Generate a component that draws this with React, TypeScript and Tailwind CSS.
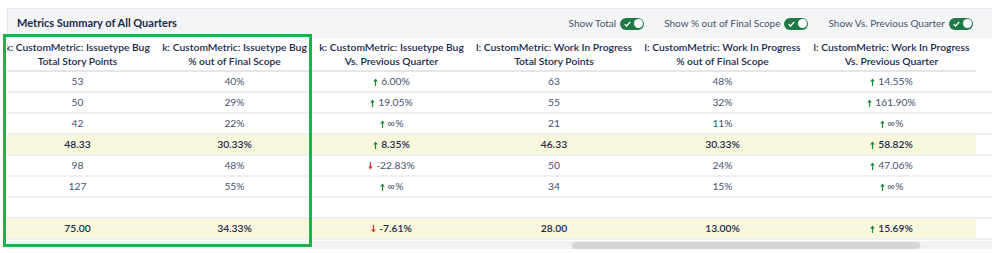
import React from "react";

type Cell = { v: string; dir?: "up" | "down" };

const headers = [
  ["k: CustomMetric: Issuetype Bug", "Total Story Points"],
  ["k: CustomMetric: Issuetype Bug", "% out of Final Scope"],
  ["k: CustomMetric: Issuetype Bug", "Vs. Previous Quarter"],
  ["l: CustomMetric: Work In Progress", "Total Story Points"],
  ["l: CustomMetric: Work In Progress", "% out of Final Scope"],
  ["l: CustomMetric: Work In Progress", "Vs. Previous Quarter"],
];

const up = (v: string): Cell => ({ v, dir: "up" });
const down = (v: string): Cell => ({ v, dir: "down" });
const c = (v: string): Cell => ({ v });

const rows: { total?: boolean; cells: Cell[] }[] = [
  { cells: [c("53"), c("40%"), up("6.00%"), c("63"), c("48%"), up("14.55%")] },
  { cells: [c("50"), c("29%"), up("19.05%"), c("55"), c("32%"), up("161.90%")] },
  { cells: [c("42"), c("22%"), up("∞%"), c("21"), c("11%"), up("∞%")] },
  { total: true, cells: [c("48.33"), c("30.33%"), up("8.35%"), c("46.33"), c("30.33%"), up("58.82%")] },
  { cells: [c("98"), c("48%"), down("-22.83%"), c("50"), c("24%"), up("47.06%")] },
  { cells: [c("127"), c("55%"), up("∞%"), c("34"), c("15%"), up("∞%")] },
  { cells: [c(""), c(""), c(""), c(""), c(""), c("")] },
  { total: true, cells: [c("75.00"), c("34.33%"), down("-7.61%"), c("28.00"), c("13.00%"), up("15.69%")] },
];

const cols = "grid grid-cols-[157px_157px_157px_168px_169px_169px_16px]";

function Arrow({ dir }: { dir: "up" | "down" }) {
  const color = dir === "up" ? "#1d8a36" : "#e0332b";
  return (
    <svg width="5" height="8" viewBox="0 0 5 8" className="mr-[3px]">
      {dir === "up" ? (
        <>
          <path d="M2.5 1.5V8" stroke={color} strokeWidth="1.2" />
          <path d="M0.2 3.6L2.5 0.6L4.8 3.6Z" fill={color} />
        </>
      ) : (
        <>
          <path d="M2.5 0V6.5" stroke={color} strokeWidth="1.2" />
          <path d="M0.2 4.4L2.5 7.4L4.8 4.4Z" fill={color} />
        </>
      )}
    </svg>
  );
}

function Toggle({ label }: { label: string }) {
  return (
    <div className="flex items-center gap-[4px]">
      <span className="text-[10px] text-[#44546f]">{label}</span>
      <div className="flex h-[12px] w-[24px] items-center justify-between rounded-full bg-[#1f7a47] pl-[4px] pr-[1.5px]">
        <svg width="7" height="6" viewBox="0 0 7 6">
          <path d="M0.7 3.2L2.6 5L6.3 0.9" stroke="white" strokeWidth="1.3" fill="none" />
        </svg>
        <div className="h-[9px] w-[9px] rounded-full bg-white" />
      </div>
    </div>
  );
}

export default function App() {
  return (
    <div
      className="relative h-[253px] w-[999px] overflow-hidden bg-white pt-[8px] pl-[7px]"
      style={{ fontFamily: "Lato, 'Noto Sans', sans-serif" }}
    >
      <div className="w-[985px]">
        {/* Card header */}
        <div className="flex h-[30px] items-center justify-between border-t border-l border-[#e6e8eb] bg-[#f4f5f6] pl-[9px] pr-[19px]">
          <span className="text-[11px] font-bold text-[#172b4d]">Metrics Summary of All Quarters</span>
          <div className="flex items-center gap-[20px]">
            <Toggle label="Show Total" />
            <Toggle label="Show % out of Final Scope" />
            <Toggle label="Show Vs. Previous Quarter" />
          </div>
        </div>

        {/* Table */}
        <div className="overflow-hidden">
          <div className="-ml-[8px] w-[993px]">
            <div className={cols}>
              {headers.map((h, i) => (
                <div
                  key={i}
                  className="flex h-[34px] flex-col items-center justify-center border-b-2 border-[#e4e6ea] text-[10.3px] font-semibold leading-[14px] text-[#172b4d] whitespace-nowrap"
                >
                  <span>{h[0]}</span>
                  <span>{h[1]}</span>
                </div>
              ))}
              <div />
            </div>
            {rows.map((r, ri) => (
              <div key={ri} className={`${cols} border-b-2 border-[#eef0f2]`}>
                {r.cells.map((cell, ci) => (
                  <div
                    key={ci}
                    className={`flex h-[19px] items-center justify-center text-[10.3px] ${
                      r.total ? "bg-[#f9f8dc] font-semibold text-[#172b4d]" : "text-[#44546f]"
                    }`}
                  >
                    {cell.dir && <Arrow dir={cell.dir} />}
                    {cell.v}
                  </div>
                ))}
                <div />
              </div>
            ))}
          </div>
          {/* Scrollbar */}
          <div className="mt-[1px] flex h-[8px] items-center bg-[#f1f1f1] pl-[565px]">
            <div className="h-[7px] w-[348px] rounded-full bg-[#d6d6d6]" />
          </div>
        </div>
      </div>

      {/* Highlight annotation */}
      <div className="pointer-events-none absolute left-[3px] top-[34px] h-[213px] w-[309px] border-[3px] border-[#20b14b]" />
    </div>
  );
}
